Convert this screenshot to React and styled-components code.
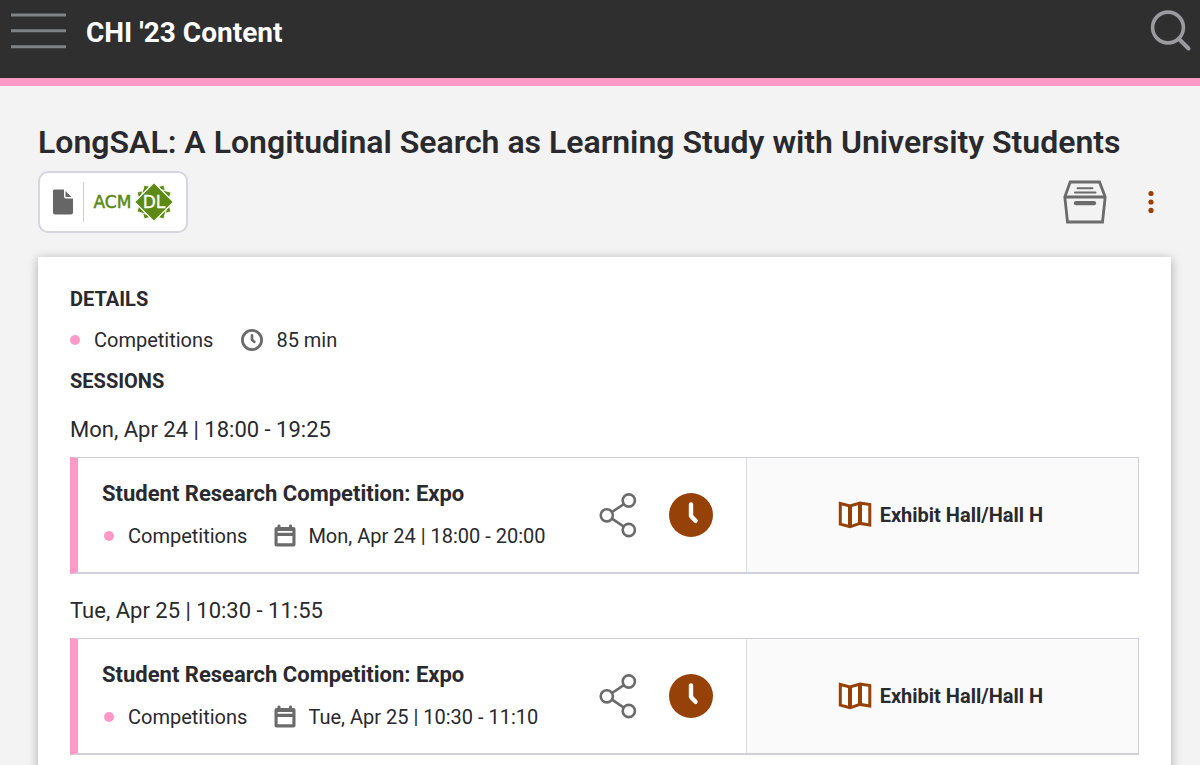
import styled, { createGlobalStyle } from "styled-components";

const sessions = [
  {
    id: "mon",
    slot: "Mon, Apr 24 | 18:00 - 19:25",
    title: "Student Research Competition: Expo",
    track: "Competitions",
    time: "Mon, Apr 24 | 18:00 - 20:00",
    room: "Exhibit Hall/Hall H",
  },
  {
    id: "tue",
    slot: "Tue, Apr 25 | 10:30 - 11:55",
    title: "Student Research Competition: Expo",
    track: "Competitions",
    time: "Tue, Apr 25 | 10:30 - 11:10",
    room: "Exhibit Hall/Hall H",
  },
];

const MenuIcon = () => (
  <svg width="56" height="36" viewBox="0 0 56 36" fill="none" stroke="#7f8386" strokeWidth="3">
    <path d="M0 2H55M0 17.8H55M0 33.8H55" />
  </svg>
);

const SearchIcon = () => (
  <svg width="42" height="42" viewBox="0 0 42 42" fill="none" stroke="#9b9b9f">
    <circle cx="18" cy="17.5" r="15.4" strokeWidth="3.6" />
    <path d="M29 29L38.5 38.5" strokeWidth="4" strokeLinecap="round" />
  </svg>
);

const FileIcon = () => (
  <svg width="22" height="26" viewBox="0 0 22 26" fill="#666">
    <path d="M2 0.5H12V7.5Q12 9.5 14 9.5H21V23.5Q21 25.5 19 25.5H3Q1 25.5 1 23.5V2Q1 0.5 2 0.5Z" />
    <path d="M13.5 2L19.5 8H13.5Z" />
  </svg>
);

const AcmLogo = () => (
  <svg
    width="82"
    height="40"
    viewBox="0 0 82 40"
    fill="#5c8a14"
    fontFamily='"DejaVu Sans", sans-serif'
    fontSize="17"
  >
    <text x="0.5" y="26" stroke="#5c8a14" strokeWidth="0.5">
      ACM
    </text>
    <g transform="translate(61 20)" stroke="#fff" strokeWidth="0.8">
      <path d="M0 -19.5L19.5 0L0 19.5L-19.5 0Z" transform="rotate(30)" />
      <path d="M0 -19.5L19.5 0L0 19.5L-19.5 0Z" transform="rotate(-30)" />
      <path d="M0 -19.5L19.5 0L0 19.5L-19.5 0Z" strokeWidth="1.2" />
    </g>
    <text x="61" y="26" fill="#fff" stroke="#fff" strokeWidth="0.3" textAnchor="middle">
      DL
    </text>
  </svg>
);

const DrawerIcon = () => (
  <svg width="44" height="44" viewBox="0 0 44 44" fill="none" stroke="#6b6b6b" strokeWidth="2.8">
    <path d="M1.8 17L7.2 2H36.5L42.2 17L39.5 42H4.5Z" />
    <path d="M2 17H42" />
    <path d="M14.5 8.2H29.5M12 12.4H32.5" strokeWidth="2" strokeLinecap="round" />
    <path d="M13 23.2H31" strokeWidth="4.2" strokeLinecap="round" />
  </svg>
);

const DotsIcon = () => (
  <svg width="8" height="24" viewBox="0 0 8 24" fill="#964108">
    <circle cx="4" cy="3.5" r="2.6" />
    <circle cx="4" cy="12" r="2.6" />
    <circle cx="4" cy="20.4" r="2.6" />
  </svg>
);

const ClockIcon = () => (
  <svg width="24" height="24" viewBox="0 0 24 24" fill="none" stroke="#6b6b6b" strokeLinecap="round">
    <circle cx="12" cy="12" r="9.6" strokeWidth="2.8" />
    <path d="M12 7.3V11.8L14.3 13.8" strokeWidth="2.6" />
  </svg>
);

const CalendarIcon = () => (
  <svg width="22" height="24" viewBox="0 0 22 24" fill="#6b6b6b">
    <path
      fillRule="evenodd"
      d="M3.5 1.5Q3.5 0.5 5 0.5T6.5 1.5V3H15V1.5Q15 0.5 16.5 0.5T18 1.5V3H19.5Q21.5 3 21.5 5V20.5Q21.5 22.5 19.5 22.5H2.5Q0.5 22.5 0.5 20.5V5Q0.5 3 2.5 3H3.5ZM3.6 6.9V8.7H18.4V6.9ZM3.6 12V19.2H18.4V12Z"
    />
  </svg>
);

const ShareIcon = () => (
  <svg width="38" height="46" viewBox="0 0 38 46" fill="none" stroke="#6b6b6b" strokeWidth="2.6">
    <circle cx="7.8" cy="23.3" r="6.1" />
    <circle cx="29.8" cy="8.5" r="6.1" />
    <circle cx="29.8" cy="38" r="6.1" />
    <path d="M13 20L24.5 12.3M13 26.7L24.5 34.4" />
  </svg>
);

const TimeIcon = () => (
  <svg width="44" height="44" viewBox="0 0 44 44">
    <circle cx="22" cy="22" r="22" fill="#964108" />
    <path
      d="M22 11.5V23L26.5 27.8"
      fill="none"
      stroke="#fff"
      strokeWidth="4.4"
      strokeLinecap="round"
      strokeLinejoin="round"
    />
  </svg>
);

const MapIcon = () => (
  <svg width="34" height="30" viewBox="0 0 34 30" fill="none" stroke="#964108" strokeWidth="3">
    <path d="M2.3 3.5L12 6L22 3L31.8 4.5V25L22 23.4L12 26.8L2.3 24.2Z" fill="#fff" />
    <path d="M12 6V26.8M22 3V23.4" strokeWidth="4" />
  </svg>
);

export default function App() {
  return (
    <>
      <GlobalStyle />
      <Header>
        <IconButton aria-label="Menu">
          <MenuIcon />
        </IconButton>
        <Brand>CHI '23 Content</Brand>
        <IconButton aria-label="Search">
          <SearchIcon />
        </IconButton>
      </Header>

      <Main>
        <Title>LongSAL: A Longitudinal Search as Learning Study with University Students</Title>
        <Toolbar>
          <LibraryLink href="#library" aria-label="ACM DL">
            <FileIcon />
            <Separator />
            <AcmLogo />
          </LibraryLink>
          <Actions>
            <IconButton aria-label="Save">
              <DrawerIcon />
            </IconButton>
            <IconButton aria-label="More">
              <DotsIcon />
            </IconButton>
          </Actions>
        </Toolbar>

        <Card>
          <Heading>DETAILS</Heading>
          <Meta>
            <Dot />
            <span>Competitions</span>
            <MetaIcon>
              <ClockIcon />
            </MetaIcon>
            <span>85 min</span>
          </Meta>
          <Heading>SESSIONS</Heading>
          {sessions.map((session) => (
            <section key={session.id}>
              <Slot>{session.slot}</Slot>
              <Session>
                <Info>
                  <Text>
                    <SessionLink href={`#${session.id}`}>{session.title}</SessionLink>
                    <Meta $inset>
                      <Dot />
                      <span>{session.track}</span>
                      <MetaIcon>
                        <CalendarIcon />
                      </MetaIcon>
                      <span>{session.time}</span>
                    </Meta>
                  </Text>
                  <SessionActions>
                    <IconButton aria-label="Share">
                      <ShareIcon />
                    </IconButton>
                    <IconButton aria-label="Time">
                      <TimeIcon />
                    </IconButton>
                  </SessionActions>
                </Info>
                <Room href="#map">
                  <MapIcon />
                  {session.room}
                </Room>
              </Session>
            </section>
          ))}
        </Card>
      </Main>
    </>
  );
}

const GlobalStyle = createGlobalStyle`
  * {
    box-sizing: border-box;
  }

  body {
    margin: 0;
    overflow-x: hidden;
    background: #f3f3f3;
    color: #29292e;
    font-family: Roboto, sans-serif;
    font-size: 20px;
    line-height: 24px;
  }

  svg {
    display: block;
    flex-shrink: 0;
  }
`;

const IconButton = styled.button`
  display: flex;
  padding: 0;
  border: 0;
  background: none;
  cursor: pointer;
`;

const Header = styled.header`
  display: flex;
  align-items: flex-start;
  height: 86px;
  padding: 10px 8px 0 11px;
  border-bottom: 8px solid #ff99c8;
  background: #2f2f2f;

  ${IconButton}:first-child {
    margin-top: 3px;
  }
`;

const Brand = styled.div`
  flex: 1;
  margin-left: 19px;
  color: #fff;
  font-size: 28px;
  font-weight: 700;
  line-height: 46px;
`;

const Main = styled.main`
  padding: 36px 29px 0 38px;
`;

const Title = styled.h1`
  margin: 0;
  font-size: 32px;
  font-weight: 600;
  line-height: 40px;
`;

const Toolbar = styled.div`
  display: flex;
  justify-content: space-between;
  align-items: center;
  margin-top: 9px;
`;

const LibraryLink = styled.a`
  display: flex;
  align-items: center;
  height: 62px;
  padding: 0 11px 0 12px;
  border: 2px solid #d5d6de;
  border-radius: 10px;
  background: #fff;
`;

const Separator = styled.span`
  width: 1px;
  height: 40px;
  margin: 0 9px;
  background: #cfcfd6;
`;

const Actions = styled.div`
  display: flex;
  align-items: center;
  gap: 40px;
  padding-right: 16px;
`;

const Card = styled.div`
  margin-top: 24px;
  padding: 30px 32px 40px;
  background: #fff;
  box-shadow: 0 2px 10px rgba(0, 0, 0, 0.3);
`;

const Heading = styled.h2`
  margin: 0;
  font-size: 20px;
  font-weight: 700;
  line-height: 24px;
`;

const Meta = styled.div`
  display: flex;
  align-items: center;
  margin: ${(props) => (props.$inset ? "18px 0 0 2px" : "17px 0")};
`;

const Dot = styled.span`
  width: 10px;
  height: 10px;
  margin-right: 14px;
  border-radius: 50%;
  background: #ff99c8;
`;

const MetaIcon = styled.span`
  display: flex;
  margin: 0 12px 0 27px;
`;

const Slot = styled.h3`
  margin: 25px 0 15px;
  font-size: 22px;
  font-weight: 400;
  line-height: 24px;
`;

const Session = styled.article`
  display: flex;
  min-height: 117px;
  border: 1px solid #cfd0db;
  border-bottom-width: 2px;
  border-left: 8px solid #ff99c8;
`;

const Info = styled.div`
  display: flex;
  flex: 1;
  justify-content: space-between;
  align-items: center;
  padding: 0 33px 0 24px;
`;

const Text = styled.div`
  display: flex;
  flex-direction: column;
`;

const SessionLink = styled.a`
  color: inherit;
  font-size: 22px;
  font-weight: 700;
  text-decoration: none;
`;

const SessionActions = styled.div`
  display: flex;
  align-items: center;
  gap: 32px;
`;

const Room = styled.a`
  display: flex;
  flex: 0 0 37%;
  justify-content: center;
  align-items: center;
  gap: 8px;
  padding-right: 4px;
  border-left: 1px solid #dcdde5;
  background: #fafafa;
  color: inherit;
  font-weight: 700;
  text-decoration: none;
`;
